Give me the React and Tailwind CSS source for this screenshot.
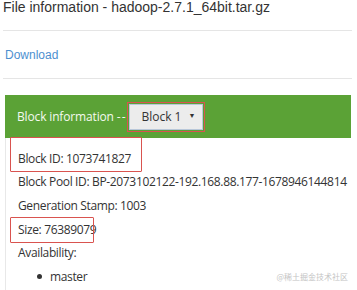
const rows = [
  { label: 'Block Pool ID: BP-2073102122-192.168.88.177-1678946144814' },
  { label: 'Generation Stamp: 1003' },
];

export default function App() {
  return (
    <div className="w-[357px] h-[290px] overflow-hidden bg-white pl-[3px] text-[#333]">
      <div className="h-[31px] w-[349px] border-b border-[#e5e5e5] font-['Liberation_Sans',Arial,sans-serif] text-[14px] leading-[15px]">
        File information - hadoop-2.7.1_64bit.tar.gz
      </div>
      <div className="h-[48px] w-[349px] border-b border-[#e5e5e5] flex items-center pl-[2px] font-['Liberation_Sans',Arial,sans-serif] text-[12px] text-[#4d8fd0]">
        Download
      </div>

      <div className="mt-[16px] ml-[2px] w-[346px] font-['Open_Sans',sans-serif] text-[12px] tracking-[-0.35px]">
        <div className="h-[43px] bg-[#5ba236] flex items-center px-[12px] text-[#f4f9ef]">
          <span className="tracking-[-0.15px]">
            Block information <span className="tracking-[1px]">-</span>-
          </span>
          <div className="relative ml-[2px] h-[30px] w-[78px] border border-[#d9534f] p-[1px] tracking-normal">
            <div className="h-full bg-[#ececec] border border-[#b8c7d9] flex items-center justify-between pl-[11px] pr-[7px] text-[#333] text-[12px]">
              <span>Block 1</span>
              <span className="text-[7px]">▼</span>
            </div>
          </div>
        </div>

        <div className="relative border-l border-[#e8e8e8] pl-[12px] pt-[9px] h-[160px]">
          <div className="relative h-[23.6px] flex items-center">
            <div className="absolute -left-[8px] -top-[10px] w-[132px] h-[35px] border border-[#d9534f] rounded-[1px]" />
            <span>Block ID: 1073741827</span>
          </div>
          {rows.map((r) => (
            <div key={r.label} className="h-[23.6px] flex items-center whitespace-nowrap">
              {r.label}
            </div>
          ))}
          <div className="relative h-[23.6px] flex items-center">
            <div className="absolute -left-[8px] top-[-1px] w-[84px] h-[26px] border border-[#d9534f] rounded-[1px]" />
            <span>Size: 76389079</span>
          </div>
          <div className="h-[23.6px] flex items-center">Availability:</div>
          <div className="h-[23.6px] flex items-center justify-between pl-[19px] pr-[3px]">
            <span className="flex items-center">
              <span className="w-[5px] h-[5px] rounded-full bg-[#333] mr-[8px]" />
              master
            </span>
            <span className="font-['Noto_Sans_CJK_SC',sans-serif] text-[8px] tracking-normal text-[#c4c4c4]">@稀土掘金技术社区</span>
          </div>
        </div>
      </div>
    </div>
  );
}
